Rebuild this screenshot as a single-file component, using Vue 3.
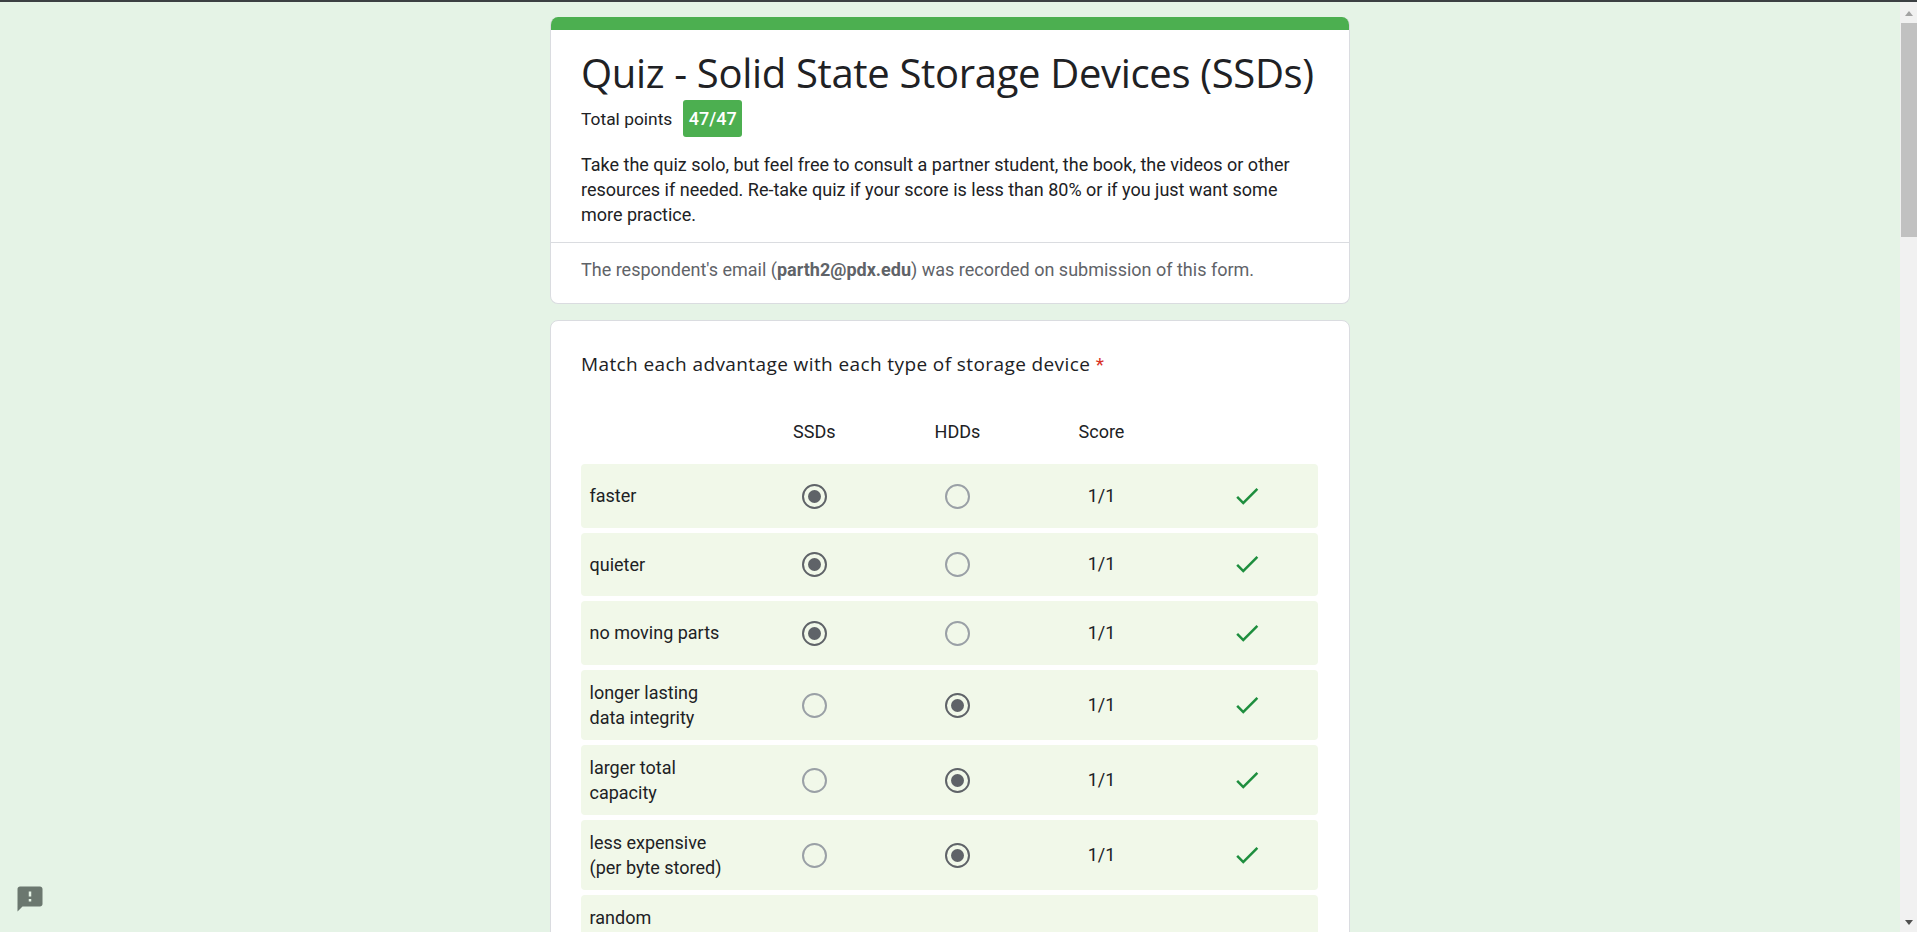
<template>
  <div class="page">
    <div class="topline"></div>
    <div class="viewport">
      <main class="form-main">
        <section class="card header-card">
          <div class="card-bar"></div>
          <div class="header-body">
            <h1 class="form-title">Quiz - Solid State Storage Devices (SSDs)</h1>
            <div class="points-row">
              <span>Total points</span>
              <span class="points-badge">47/47</span>
            </div>
            <p class="form-desc">
              Take the quiz solo, but feel free to consult a partner student, the book, the videos or other resources if needed. Re-take quiz if your score is less than 80% or if you just want some more practice.
            </p>
          </div>
          <div class="email-note">
            The respondent's email (<b>parth2@pdx.edu</b>) was recorded on submission of this form.
          </div>
        </section>

        <section class="card question-card">
          <div class="question-title">Match each advantage with each type of storage device <span class="required">*</span></div>
          <div class="grid-head">
            <span></span>
            <span class="cell">SSDs</span>
            <span class="cell">HDDs</span>
            <span class="cell">Score</span>
            <span></span>
          </div>
          <div class="grid-rows">
            <div v-for="row in rows" :key="row.label" class="grid-row">
              <span class="row-label">{{ row.label }}</span>
              <template v-if="row.answer">
                <span class="cell"><span class="radio" :class="{ on: row.answer === 'ssd' }"></span></span>
                <span class="cell"><span class="radio" :class="{ on: row.answer === 'hdd' }"></span></span>
                <span class="cell score">1/1</span>
                <span class="cell">
                  <svg class="check" viewBox="0 0 24 24" width="30" height="30">
                    <path d="M9 16.17L4.83 12l-1.42 1.41L9 19 21 7l-1.41-1.41z" />
                  </svg>
                </span>
              </template>
            </div>
          </div>
        </section>
      </main>

      <aside class="scrollbar">
        <div class="scroll-btn top"><span class="arrow up"></span></div>
        <div class="scroll-track"><div class="scroll-thumb"></div></div>
        <div class="scroll-btn bottom"><span class="arrow down"></span></div>
      </aside>
    </div>

    <button class="feedback-btn" aria-label="Report">
      <svg viewBox="0 0 24 24" width="30" height="30">
        <path d="M20 2H4c-1.1 0-1.99.9-1.99 2L2 22l4-4h14c1.1 0 2-.9 2-2V4c0-1.1-.9-2-2-2zm-7 12h-2v-2h2v2zm0-4h-2V6h2v4z" />
      </svg>
    </button>
  </div>
</template>

<script setup>
const rows = [
  { label: 'faster', answer: 'ssd' },
  { label: 'quieter', answer: 'ssd' },
  { label: 'no moving parts', answer: 'ssd' },
  { label: 'longer lasting\ndata integrity', answer: 'hdd' },
  { label: 'larger total\ncapacity', answer: 'hdd' },
  { label: 'less expensive\n(per byte stored)', answer: 'hdd' },
  { label: 'random' }
]
</script>

<style>
html,
body {
  margin: 0;
  height: 100%;
  overflow: hidden;
}
</style>

<style scoped>
.page {
  height: 932px;
  display: flex;
  flex-direction: column;
  background: #e5f3e6;
  font-family: Roboto, 'Liberation Sans', sans-serif;
  font-size: 18px;
  color: #202124;
  overflow: hidden;
}

.topline {
  height: 2px;
  flex: none;
  background: #3c4043;
}

.viewport {
  flex: 1;
  min-height: 0;
  display: flex;
}

.form-main {
  flex: 1;
  min-width: 0;
  overflow: hidden;
  padding-top: 15px;
  display: flex;
  flex-direction: column;
  align-items: center;
  gap: 16px;
}

.card {
  width: 800px;
  box-sizing: border-box;
  flex: none;
  background: #fff;
  border: 1px solid #dadce0;
  border-radius: 8px;
}

.header-card {
  border-top: none;
  overflow: hidden;
}

.card-bar {
  height: 13px;
  margin: 0 -1px;
  background: #4caf50;
}

.header-body {
  padding: 19px 30px 15px;
  border-bottom: 1px solid #dadce0;
}

.form-title {
  margin: 0;
  font-family: 'Open Sans', sans-serif;
  font-size: 40px;
  font-weight: 400;
  letter-spacing: -0.33px;
  line-height: 48px;
  white-space: nowrap;
}

.points-row {
  display: flex;
  align-items: center;
  gap: 11px;
  margin-top: 3px;
  font-size: 17.4px;
}

.points-badge {
  width: 59px;
  height: 37px;
  border-radius: 3px;
  background: #4caf50;
  color: #fff;
  font-size: 18px;
  font-weight: 500;
  display: flex;
  align-items: center;
  justify-content: center;
}

.form-desc {
  margin: 15px 0 0;
  line-height: 25px;
}

.email-note {
  padding: 14px 30px 21px;
  line-height: 25px;
  color: #5f6368;
}

.question-card {
  padding: 31px 31px 40px 30px;
}

.question-title {
  font-family: 'Open Sans', sans-serif;
  font-size: 19px;
  letter-spacing: 0.4px;
  line-height: 24px;
}

.required {
  font-family: Roboto, sans-serif;
  color: #d93025;
}

.grid-head,
.grid-row {
  display: grid;
  grid-template-columns: 161.5px 143.5px 143px 145px 1fr;
  align-items: center;
}

.grid-head {
  height: 40px;
  margin: 34px 0 13px;
}

.cell {
  display: flex;
  justify-content: center;
  align-items: center;
}

.grid-rows {
  display: flex;
  flex-direction: column;
  gap: 5px;
}

.grid-row {
  min-height: 63.5px;
  box-sizing: border-box;
  padding: 10px 0;
  border-radius: 4px;
  background: #f1f8e9;
}

.grid-row:last-child {
  min-height: 120px;
  align-items: start;
}

.row-label {
  padding-left: 8.5px;
  line-height: 25px;
  white-space: pre-line;
}

.radio {
  width: 25px;
  height: 25px;
  margin-top: 1px;
  box-sizing: border-box;
  border: 2px solid #9aa0a6;
  border-radius: 50%;
  display: flex;
  align-items: center;
  justify-content: center;
}

.radio.on {
  border-color: #5f6368;
}

.radio.on::after {
  content: '';
  width: 13px;
  height: 13px;
  border-radius: 50%;
  background: #5f6368;
}

.score {
  margin-top: -1px;
}

.check {
  fill: #1e8e3e;
  margin-left: 2px;
}

.scrollbar {
  width: 17px;
  flex: none;
  display: flex;
  flex-direction: column;
  background: #f1f1f1;
}

.scroll-btn {
  flex: none;
  box-sizing: border-box;
  display: flex;
  align-items: center;
  justify-content: center;
}

.scroll-btn.top {
  height: 21px;
  padding-top: 2px;
}

.scroll-btn.bottom {
  height: 17px;
  padding-bottom: 2px;
}

.arrow {
  width: 0;
  height: 0;
  border-left: 4.5px solid transparent;
  border-right: 4.5px solid transparent;
}

.arrow.up {
  border-bottom: 5px solid #a3a3a3;
}

.arrow.down {
  border-top: 5px solid #505050;
}

.scroll-track {
  flex: 1;
  padding-left: 1px;
}

.scroll-thumb {
  height: 214px;
  background: #c1c1c1;
}

.feedback-btn {
  position: fixed;
  left: 15px;
  bottom: 18px;
  padding: 0;
  border: none;
  background: none;
  line-height: 0;
}

.feedback-btn svg {
  fill: #6b776f;
}
</style>
